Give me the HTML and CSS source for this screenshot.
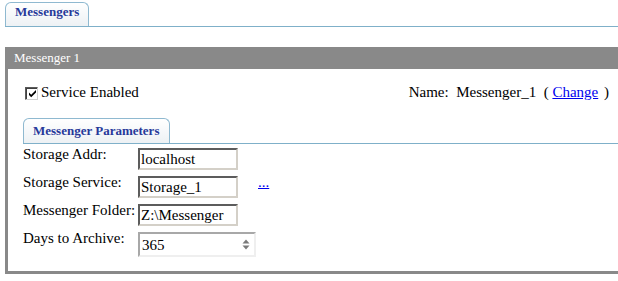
FILE: index.html
```html
<!DOCTYPE html>
<html>
<head>
<meta charset="utf-8">
<link rel="stylesheet" href="styles.css">
</head>
<body>
<div class="page">
  <div class="tabbar">
    <div class="tab">Messengers</div>
  </div>

  <div class="panel">
    <div class="panel-header">Messenger 1</div>
    <div class="panel-body">
      <div class="top-row">
        <label class="check-label">
          <span class="checkbox"><svg width="9" height="9" viewBox="0 0 9 9"><path d="M1 3.6 L3.2 5.8 L8 1 L8 3.4 L3.2 8.2 L1 6 Z" fill="#000"/></svg></span>Service Enabled
        </label>
        <div class="name">Name:&nbsp;&nbsp;Messenger_1&nbsp;&nbsp;(&nbsp;<a href="#" class="link">Change</a>&nbsp;<span class="paren">)</span></div>
      </div>

      <div class="tabbar inner">
        <div class="tab">Messenger Parameters</div>
      </div>

      <div class="form">
        <div class="label">Storage Addr:</div>
        <input class="field" type="text" value="localhost">
        <div></div>

        <div class="label">Storage Service:</div>
        <input class="field" type="text" value="Storage_1">
        <a href="#" class="link dots">...</a>

        <div class="label">Messenger Folder:</div>
        <input class="field" type="text" value="Z:\Messenger">
        <div></div>

        <div class="label">Days to Archive:</div>
        <div class="number">
          <input class="num-input" type="text" value="365">
          <span class="spin"><svg width="8" height="11" viewBox="0 0 8 11"><path d="M4 0.5 L7.5 4.5 L0.5 4.5 Z" fill="#7a7a7a"/><path d="M0.5 6.5 L7.5 6.5 L4 10.5 Z" fill="#7a7a7a"/></svg></span>
        </div>
        <div></div>
      </div>
    </div>
  </div>
</div>
</body>
</html>
```

FILE: styles.css
```css
html, body {
  margin: 0;
  padding: 0;
  background: #fff;
}

body {
  font-family: "Liberation Serif", "Times New Roman", serif;
  font-size: 15px;
  color: #000;
}

.page {
  overflow: hidden;
  padding: 2px 0 0 5px;
  height: 279px;
}

.tabbar {
  display: flex;
  border-bottom: 1px solid #7fb0c9;
}

.tab {
  font-size: 13px;
  font-weight: bold;
  color: #27399a;
  line-height: 18px;
  padding: 0 9px 5px 9px;
  border: 1px solid #8fb9d0;
  border-bottom: none;
  border-radius: 6px 6px 0 0;
  background: linear-gradient(#ffffff, #edf1f4);
}

.panel {
  margin-top: 20px;
  margin-right: -8px;
  border-left: 3px solid #898989;
  border-right: 3px solid #898989;
  border-bottom: 3px solid #898989;
}

.panel-header {
  background: #898989;
  color: #fff;
  font-size: 13px;
  line-height: 22px;
  height: 22px;
  margin-left: -3px;
  margin-right: -3px;
  padding-left: 9px;
}

.panel-body {
  padding: 15px 0 13px 15px;
}

.top-row {
  display: flex;
  justify-content: space-between;
  line-height: 17px;
  padding-right: 14px;
}

.check-label {
  display: flex;
  align-items: center;
  padding-left: 2px;
}

.checkbox {
  box-sizing: border-box;
  width: 13px;
  height: 13px;
  border: 1px solid;
  border-color: #5a5a5a #d0d0d0 #d0d0d0 #5a5a5a;
  box-shadow: inset 1px 1px 0 #404040;
  background: #fff;
  margin-right: 3px;
  margin-top: 1px;
  display: flex;
  align-items: center;
  justify-content: center;
  padding: 1px 0 0 1px;
}

.checkbox svg {
  display: block;
}

.link {
  color: #0000ee;
  text-decoration: underline;
}

.paren {
  margin-left: 2px;
}

.tabbar.inner {
  margin-top: 17px;
}

.tabbar.inner .tab {
  padding: 3px 10px 3px 9px;
}

.form {
  display: grid;
  grid-template-columns: 115px 100px 1fr;
  grid-auto-rows: 28px;
  margin-top: 2px;
  line-height: 17px;
}

.label {
  white-space: nowrap;
}

.field {
  box-sizing: border-box;
  width: 100px;
  height: 22px;
  margin: 2px 0 0 0;
  padding: 0 0 0 1px;
  font-family: "Liberation Serif", "Times New Roman", serif;
  font-size: 15px;
  color: #000;
  background: #fff;
  border-style: solid;
  border-width: 2px;
  border-color: #5c5c5c #d4d0c8 #d4d0c8 #5c5c5c;
  outline: none;
}

.dots {
  margin-left: 20px;
  align-self: start;
  justify-self: start;
}

.number {
  box-sizing: border-box;
  width: 118px;
  height: 25px;
  margin-top: 2px;
  display: flex;
  align-items: center;
  border-style: solid;
  border-width: 2px;
  border-color: #a8a8a8 #efefef #efefef #a8a8a8;
  background: #fff;
}

.num-input {
  flex: 1;
  min-width: 0;
  border: none;
  outline: none;
  padding: 0 0 0 2px;
  margin: 2px 0 0 0;
  font-family: "Liberation Serif", "Times New Roman", serif;
  font-size: 15px;
  color: #000;
  background: transparent;
}

.spin {
  display: flex;
  width: 8px;
  margin-right: 4px;
}

.spin svg {
  display: block;
}
```
